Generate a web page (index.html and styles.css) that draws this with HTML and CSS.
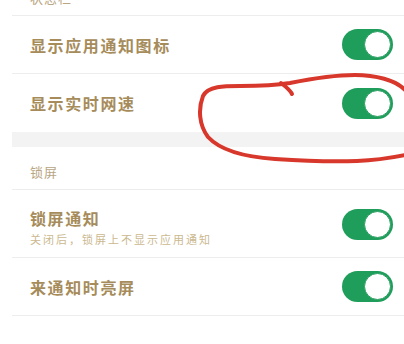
FILE: index.html
```html
<!DOCTYPE html>
<html lang="zh-CN">
<head>
<meta charset="utf-8">
<link rel="stylesheet" href="styles.css">
</head>
<body>
<div class="page">
  <div class="list first">
    <div class="group-head"><span>状态栏</span></div>
    <div class="row">
      <div class="label"><div class="title">显示应用通知图标</div></div>
      <div class="switch"><div class="knob"></div></div>
    </div>
    <div class="row last">
      <div class="label"><div class="title">显示实时网速</div></div>
      <div class="switch"><div class="knob"></div></div>
    </div>
    <div class="gap"></div>
    <div class="group-head"><span>锁屏</span></div>
    <div class="row tall">
      <div class="label">
        <div class="title">锁屏通知</div>
        <div class="sub">关闭后，锁屏上不显示应用通知</div>
      </div>
      <div class="switch low"><div class="knob"></div></div>
    </div>
    <div class="row">
      <div class="label"><div class="title">来通知时亮屏</div></div>
      <div class="switch"><div class="knob"></div></div>
    </div>
  </div>
  <svg class="scribble" width="404" height="344" viewBox="0 0 404 344">
    <path d="M 405 90 C 396 80, 375 75, 355 75 C 335 75, 310 79, 290 83 C 272 86, 256 86, 240 86 C 224 86, 208 86, 203 96 C 198 109, 199 125, 208 137 C 220 150, 245 157, 275 159 C 305 161, 330 162, 357 161 C 380 160, 395 157, 405 155" />
    <path d="M 281 83 C 285 86, 290 90, 292 94" />
  </svg>
</div>
</body>
</html>
```

FILE: styles.css
```css
html, body {
  margin: 0;
  padding: 0;
  background: #ffffff;
}
body {
  width: 404px;
  height: 344px;
  overflow: hidden;
  font-family: "Noto Sans CJK SC", "Noto Sans", sans-serif;
}
.page {
  position: relative;
  width: 404px;
  height: 344px;
  overflow: hidden;
}
.list {
  margin-left: 12px;
  display: flex;
  flex-direction: column;
}
.list.first {
  margin-top: -27px;
}
.group-head {
  border-bottom: 1px solid #ededed;
  display: flex;
  align-items: flex-end;
  padding-left: 18px;
  padding-bottom: 8px;
  box-sizing: border-box;
  height: 43px;
}
.group-head span {
  font-size: 13px;
  line-height: 18px;
  color: #b9a682;
  letter-spacing: 1px;
}
.row {
  height: 58px;
  box-sizing: border-box;
  border-bottom: 1px solid #ededed;
  display: flex;
  align-items: center;
  justify-content: space-between;
  padding: 0 11px 0 18px;
}
.row.last {
  border-bottom: none;
}
.row.tall {
  height: 68px;
}
.label {
  display: flex;
  flex-direction: column;
}
.title {
  font-size: 16px;
  line-height: 22px;
  font-weight: 700;
  color: #a68c5a;
  letter-spacing: 1.6px;
}
.sub {
  font-size: 11px;
  line-height: 16px;
  color: #cbb98f;
  letter-spacing: 2px;
  margin-top: 2px;
}
.tall .label {
  margin-top: 6px;
}
.switch {
  width: 51px;
  height: 31px;
  border-radius: 16px;
  background: #1f9d5b;
  display: flex;
  align-items: center;
  justify-content: flex-end;
  padding-right: 2px;
  box-sizing: border-box;
}
.switch.low {
  margin-top: 2px;
}
.knob {
  width: 27px;
  height: 27px;
  border-radius: 50%;
  background: #ffffff;
  box-sizing: border-box;
  border: 1px solid #2a9f61;
}
.gap {
  height: 15px;
  background: #f3f3f3;
}
.scribble {
  position: absolute;
  left: 0;
  top: 0;
  pointer-events: none;
}
.scribble path {
  fill: none;
  stroke: #d8372b;
  stroke-width: 4;
  stroke-linecap: round;
  stroke-linejoin: round;
}
```
